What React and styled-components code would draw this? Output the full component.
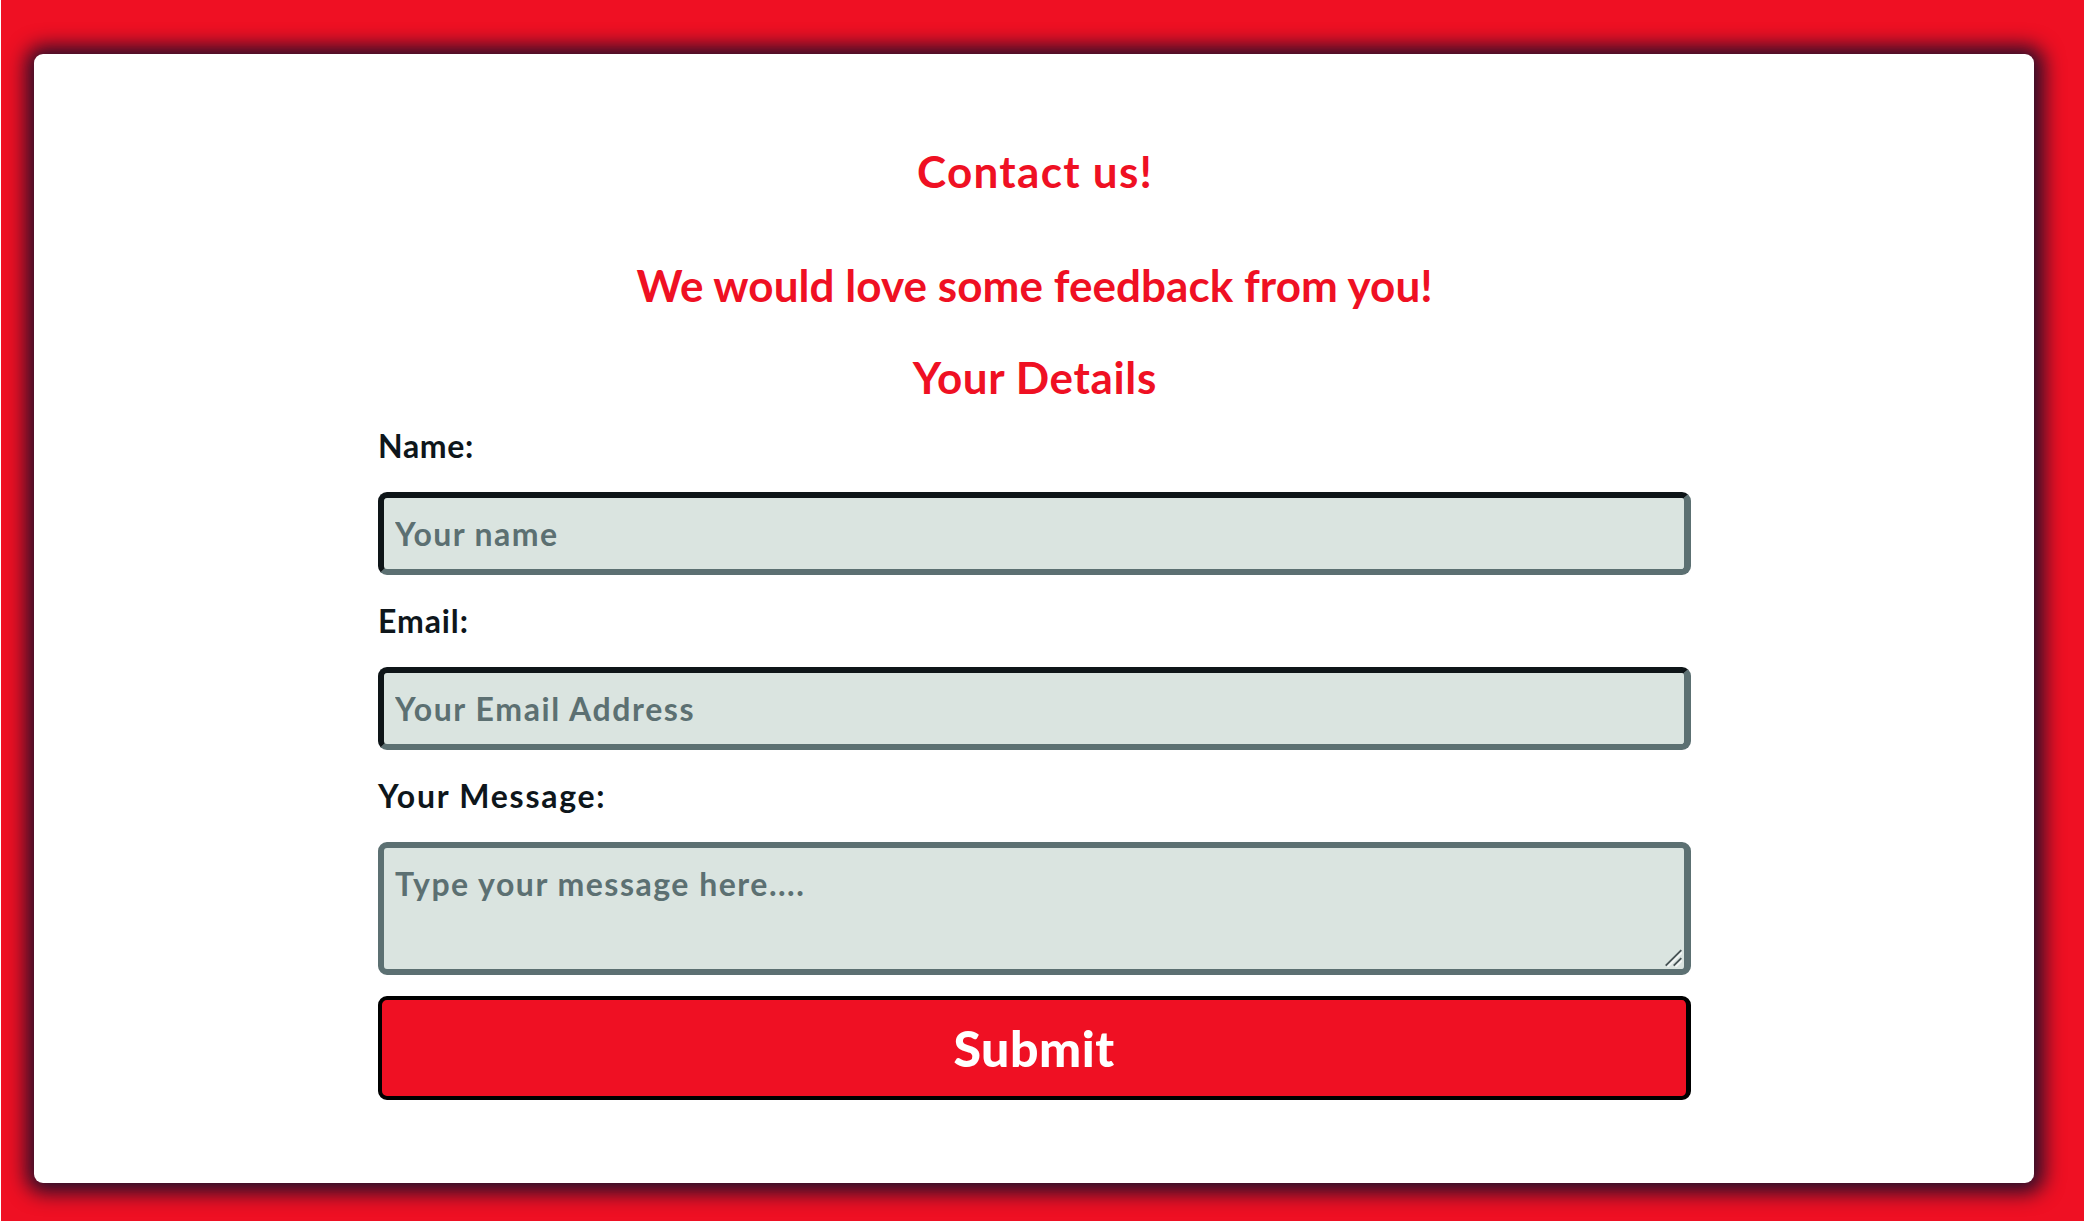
import React from "react";
import styled, { createGlobalStyle, css } from "styled-components";

const GlobalStyle = createGlobalStyle`
  * { box-sizing: border-box; }
  body { margin: 0; background: #ef1023; }
`;

const Page = styled.main`
  height: 1221px;
  padding: 54px 50px 38px 33px;
  border-left: 1px solid #fff;
  background: #ef1023;
  overflow: hidden;
  font-family: Lato, "Liberation Sans", sans-serif;
  font-weight: 700;
`;

const Card = styled.section`
  height: 1129px;
  padding: 90px 0 0 1px;
  border-radius: 9px;
  background: #fff;
  box-shadow: 1px 1px 20px 9px #260f2a;
`;

const Heading = styled.h2`
  margin: 0 0 ${(p) => p.$gap}px;
  font-size: 44px;
  font-weight: 700;
  line-height: 54px;
  letter-spacing: ${(p) => p.$tracking}px;
  text-indent: ${(p) => p.$tracking}px;
  text-align: center;
  color: #ef1023;
`;

const Form = styled.form`
  display: flex;
  flex-direction: column;
  width: 1313px;
  margin-left: 343px;
`;

const Label = styled.label`
  margin-bottom: 26px;
  font-size: 32px;
  line-height: 40px;
  letter-spacing: ${(p) => p.$tracking}px;
  color: #0e161b;
`;

const fieldStyle = css`
  display: block;
  width: 100%;
  margin: 0;
  border: 6px solid #5c7072;
  border-right-width: 7px;
  border-radius: 9px;
  background: #dae4e0;
  font: inherit;
  font-size: 32px;
  outline: none;

  &::placeholder {
    color: #5c7072;
    opacity: 1;
  }
`;

const TextInput = styled.input`
  ${fieldStyle}
  height: 83px;
  margin-bottom: 26px;
  padding: 0 11px;
  border-top-color: #0e1518;
  border-left-color: #0e1518;
  letter-spacing: ${(p) => p.$tracking}px;
`;

const MessageField = styled.div`
  position: relative;
  margin-bottom: 21px;
`;

const MessageInput = styled.textarea`
  ${fieldStyle}
  height: 133px;
  padding: 16px 11px;
  line-height: 40px;
  letter-spacing: 1.5px;
  resize: none;
  overflow: hidden;
`;

const ResizeGrip = styled.svg`
  position: absolute;
  right: 9px;
  bottom: 8px;
`;

const SubmitButton = styled.button`
  height: 104px;
  padding: 0;
  border: 4px solid #000;
  border-right-width: 5px;
  border-radius: 9px;
  background: #ef1023;
  color: #fff;
  font: inherit;
  font-size: 50px;
  font-weight: 900;
  line-height: 94px;
  letter-spacing: 0.5px;
`;

export default function App() {
  return (
    <>
      <GlobalStyle />
      <Page>
        <Card>
          <Heading $gap={60} $tracking={1.3}>Contact us!</Heading>
          <Heading $gap={38} $tracking={0.05}>We would love some feedback from you!</Heading>
          <Heading $gap={22} $tracking={0.64}>Your Details</Heading>
          <Form>
            <Label htmlFor="name" $tracking={0.66}>Name:</Label>
            <TextInput id="name" placeholder="Your name" $tracking={1.4} />
            <Label htmlFor="email" $tracking={0.9}>Email:</Label>
            <TextInput id="email" type="email" placeholder="Your Email Address" $tracking={1.6} />
            <Label htmlFor="message" $tracking={1.74}>Your Message:</Label>
            <MessageField>
              <MessageInput id="message" placeholder="Type your message here...." />
              <ResizeGrip width="17" height="18" viewBox="0 0 17 18" fill="none" strokeWidth="1.8">
                <path d="M2.5 18 17 3.5M10.5 18l6.5-6.5" stroke="#f3f6f5" />
                <path d="M.7 16.7 16.3 1.1M8.7 16.7l7.6-7.6" stroke="#465254" />
              </ResizeGrip>
            </MessageField>
            <SubmitButton type="button">Submit</SubmitButton>
          </Form>
        </Card>
      </Page>
    </>
  );
}
